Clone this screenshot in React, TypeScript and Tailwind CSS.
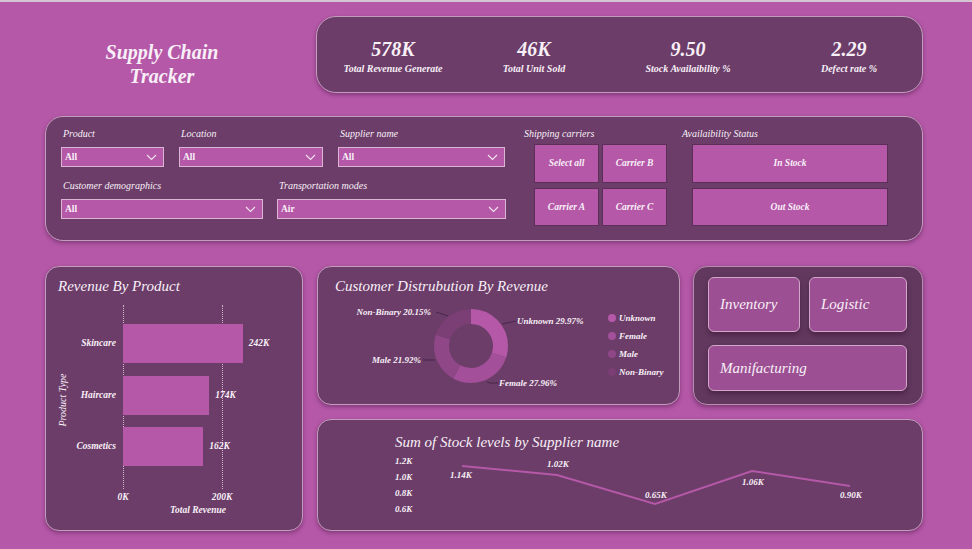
import React from 'react';

type Kpi = { value: string; label: string; width: string };

const kpis: Kpi[] = [
  { value: '578K', label: 'Total Revenue Generate', width: 'w-[152px]' },
  { value: '46K', label: 'Total Unit Sold', width: 'w-[130px]' },
  { value: '9.50', label: 'Stock Availaibility %', width: 'w-[178px]' },
  { value: '2.29', label: 'Defect rate %', width: 'w-[144px]' },
];

const products = [
  { name: 'Skincare', value: 242 },
  { name: 'Haircare', value: 174 },
  { name: 'Cosmetics', value: 162 },
];

const segments = [
  { name: 'Unknown', pct: 29.97, color: '#b558a8' },
  { name: 'Female', pct: 27.96, color: '#a34f99' },
  { name: 'Male', pct: 21.92, color: '#8f4787' },
  { name: 'Non-Binary', pct: 20.15, color: '#7b3f76' },
];

const stock = [
  { x: 144, y: 46, label: '1.14K', lx: 143, ly: 55 },
  { x: 239, y: 55, label: '1.02K', lx: 240, ly: 44 },
  { x: 337, y: 84, label: '0.65K', lx: 338, ly: 75 },
  { x: 434, y: 51, label: '1.06K', lx: 435, ly: 62 },
  { x: 532, y: 66, label: '0.90K', lx: 533, ly: 75 },
];

const panel =
  'border border-[#c29cbd] bg-[#6b3d68] shadow-[0_2px_4px_rgba(70,20,65,0.45)]';

function Chevron() {
  return (
    <svg width="11" height="7" viewBox="0 0 11 7" fill="none">
      <path d="M1 1l4.5 4.5L10 1" stroke="#f3e4f0" strokeWidth="1.1" />
    </svg>
  );
}

function Dropdown({ label, value, width }: { label: string; value: string; width: string }) {
  return (
    <div className={width}>
      <p className="h-[12px] pl-[2px] text-[10px] italic leading-[12px]">{label}</p>
      <div className="mt-[7px] flex h-[20px] items-center justify-between border border-[#dab6d4] bg-[#b558a8] pl-[3px] pr-[6px]">
        <span className="text-[9.5px] font-bold">{value}</span>
        <Chevron />
      </div>
    </div>
  );
}

function Tile({ text, className }: { text: string; className: string }) {
  return (
    <div
      className={`flex items-center justify-center border border-[#5b2f57] bg-[#b558a8] text-[9.5px] font-bold italic ${className}`}
    >
      {text}
    </div>
  );
}

function Donut() {
  const r = 29.5;
  const c = 2 * Math.PI * r;
  let offset = 0;
  return (
    <svg className="absolute left-0 top-0" width="361" height="137" viewBox="0 0 361 137">
      <g transform="rotate(-90 153 79)">
        {segments.map((s) => {
          const len = (s.pct / 100) * c;
          const el = (
            <circle
              key={s.name}
              cx="153"
              cy="79"
              r={r}
              fill="none"
              stroke={s.color}
              strokeWidth="15"
              strokeDasharray={`${len} ${c - len}`}
              strokeDashoffset={-offset}
            />
          );
          offset += len;
          return el;
        })}
      </g>
      <g stroke="#3f2240" strokeWidth="0.8" fill="none">
        <path d="M118 45 L130 49" />
        <path d="M184 57 L198 54" />
        <path d="M105 93 L117 93" />
        <path d="M169 115 L172 116 L180 116" />
      </g>
    </svg>
  );
}

export default function App() {
  return (
    <div className="h-[549px] w-[972px] overflow-hidden border-t-2 border-[#d3c5d1] bg-[#b558a8] pl-[45px] pr-[49px] pt-[14px] [font-family:'Liberation_Serif','Times_New_Roman',serif] text-[#f8eff7]">
      {/* header row */}
      <div className="flex h-[77px] items-start">
        <div className="-ml-[45px] w-[316px] pl-[8px] pt-[24px] text-center text-[20px] font-bold italic leading-[24px]">
          Supply Chain
          <br />
          Tracker
        </div>
        <div className={`flex h-[77px] flex-1 rounded-[20px] pt-[21px] ${panel}`}>
          {kpis.map((k) => (
            <div key={k.label} className={`flex flex-col items-center ${k.width}`}>
              <span className="text-[20px] font-bold italic leading-[22px]">{k.value}</span>
              <span className="mt-[3px] text-[10px] font-bold italic leading-[12px]">{k.label}</span>
            </div>
          ))}
        </div>
      </div>

      {/* filters */}
      <div className={`mt-[23px] flex h-[125px] rounded-[18px] pl-[15px] pt-[11px] ${panel}`}>
        <div className="w-[445px]">
          <div className="flex gap-[15px]">
            <Dropdown label="Product" value="All" width="w-[103px]" />
            <Dropdown label="Location" value="All" width="w-[144px]" />
            <Dropdown label="Supplier name" value="All" width="w-[167px]" />
          </div>
          <div className="mt-[13px] flex gap-[14px]">
            <Dropdown label="Customer demographics" value="All" width="w-[202px]" />
            <Dropdown label="Transportation modes" value="Air" width="w-[229px]" />
          </div>
        </div>
        <div className="ml-[18px] w-[143px]">
          <p className="h-[12px] text-[10px] italic leading-[12px]">Shipping carriers</p>
          <div className="mt-[4px] grid grid-cols-[65px_65px] gap-x-[3px] gap-y-[5px] pl-[10px]">
            <Tile text="Select all" className="h-[39px]" />
            <Tile text="Carrier B" className="h-[39px]" />
            <Tile text="Carrier A" className="h-[38px]" />
            <Tile text="Carrier C" className="h-[38px]" />
          </div>
        </div>
        <div className="ml-[15px]">
          <p className="h-[12px] text-[10px] italic leading-[12px]">Availaibility Status</p>
          <div className="mt-[4px] flex flex-col gap-[5px] pl-[10px]">
            <Tile text="In Stock" className="h-[39px] w-[196px]" />
            <Tile text="Out Stock" className="h-[38px] w-[196px]" />
          </div>
        </div>
      </div>

      {/* bottom */}
      <div className="mt-[25px] flex h-[265px] gap-[14px]">
        <div className={`relative h-[265px] w-[258px] rounded-[14px] ${panel}`}>
          <p className="pl-[12px] pt-[10px] text-[15px] italic leading-[18px]">Revenue By Product</p>
          <div className="absolute left-[77px] top-[38px] h-[184px] border-l border-dotted border-[#d4b6cf]" />
          <div className="absolute left-[176px] top-[38px] h-[184px] border-l border-dotted border-[#d4b6cf]" />
          <p className="absolute left-[16px] top-[133px] -translate-x-1/2 -translate-y-1/2 -rotate-90 whitespace-nowrap text-[10px] italic">
            Product Type
          </p>
          <div className="relative mt-[29px] flex flex-col gap-[12.5px]">
            {products.map((p) => (
              <div key={p.name} className="flex h-[39px] items-center">
                <span className="w-[70px] text-right text-[9.5px] font-bold italic">{p.name}</span>
                <div
                  className="ml-[7px] h-[39px] bg-[#b558a8]"
                  style={{ width: `${(p.value / 200) * 99}px` }}
                />
                <span className="ml-[6px] text-[9.5px] font-bold italic">{p.value}K</span>
              </div>
            ))}
          </div>
          <div className="relative mt-[25px] h-[12px] text-[9.5px] font-bold italic leading-[12px]">
            <span className="absolute left-[77px] -translate-x-1/2">0K</span>
            <span className="absolute left-[176px] -translate-x-1/2">200K</span>
          </div>
          <p className="w-[227px] pl-[77px] text-center text-[9.5px] font-bold italic leading-[14px]">
            Total Revenue
          </p>
        </div>

        <div className="flex w-[606px] flex-col gap-[14px]">
          <div className="flex h-[139px] gap-[13px]">
            <div className={`relative h-[139px] w-[363px] rounded-[14px] ${panel}`}>
              <Donut />
              <p className="relative pl-[17px] pt-[10px] text-[15px] italic leading-[18px]">
                Customer Distrubution By Revenue
              </p>
              <div className="text-[9px] font-bold italic leading-[12px]">
                <span className="absolute left-[113px] top-[39px] -translate-x-full whitespace-nowrap">Non-Binary 20.15%</span>
                <span className="absolute left-[199px] top-[48px] whitespace-nowrap">Unknown 29.97%</span>
                <span className="absolute left-[103px] top-[87px] -translate-x-full whitespace-nowrap">Male 21.92%</span>
                <span className="absolute left-[181px] top-[110px] whitespace-nowrap">Female 27.96%</span>
              </div>
              <div className="absolute left-[290px] top-[45px] flex flex-col gap-[6px] text-[9px] font-bold italic leading-[12px]">
                {segments.map((s) => (
                  <div key={s.name} className="flex items-center gap-[3px]">
                    <span className="h-[8px] w-[8px] rounded-full" style={{ background: s.color }} />
                    <span>{s.name}</span>
                  </div>
                ))}
              </div>
            </div>

            <div className="flex h-[139px] w-[230px] flex-wrap content-start gap-x-[9px] gap-y-[13px] rounded-[14px] border border-[#b58eaf] bg-[#62385e] pl-[14px] pt-[10px] shadow-[0_2px_5px_rgba(60,15,55,0.5)]">
              {[
                ['Inventory', 'w-[92px] h-[55px]'],
                ['Logistic', 'w-[98px] h-[55px]'],
                ['Manifacturing', 'w-[199px] h-[46px]'],
              ].map(([t, size]) => (
                <div
                  key={t}
                  className={`flex items-center rounded-[6px] border border-[#d3a7cc] bg-[#9c4f92] pl-[11px] text-[15px] italic shadow-[0_3px_5px_rgba(50,10,45,0.45)] ${size}`}
                >
                  {t}
                </div>
              ))}
            </div>
          </div>

          <div className={`relative h-[112px] rounded-[14px] ${panel}`}>
            <p className="pl-[77px] pt-[13px] text-[15px] italic leading-[18px]">
              Sum of Stock levels by Supplier name
            </p>
            <div className="absolute left-[77px] top-[35px] flex flex-col gap-[4px] text-[9px] font-bold italic leading-[12px]">
              <span>1.2K</span>
              <span>1.0K</span>
              <span>0.8K</span>
              <span>0.6K</span>
            </div>
            <svg className="absolute left-0 top-0" width="604" height="110" viewBox="0 0 604 110">
              <polyline
                points={stock.map((p) => `${p.x},${p.y}`).join(' ')}
                fill="none"
                stroke="#b558a8"
                strokeWidth="2"
              />
            </svg>
            {stock.map((p) => (
              <span
                key={p.label}
                className="absolute -translate-x-1/2 -translate-y-1/2 text-[9px] font-bold italic leading-[12px]"
                style={{ left: p.lx, top: p.ly }}
              >
                {p.label}
              </span>
            ))}
          </div>
        </div>
      </div>
    </div>
  );
}
